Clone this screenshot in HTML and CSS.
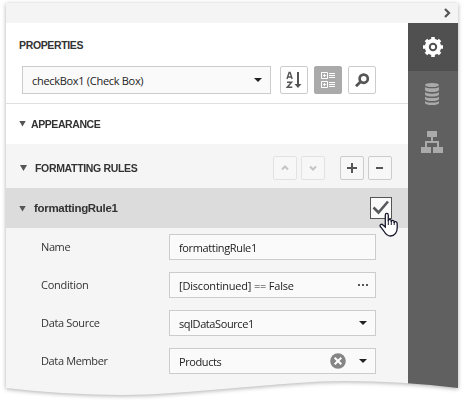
FILE: index.html
```html
<!DOCTYPE html>
<html lang="en">
<head>
<meta charset="utf-8">
<title>Properties</title>
<link rel="stylesheet" href="styles.css">
</head>
<body>
<div class="shadow">
<div class="panel">
  <header class="topbar"><svg width="7" height="10" viewBox="0 0 7 10"><path d="M1 1l4 4-4 4" fill="none" stroke="#555" stroke-width="2.200"/></svg></header>
  <div class="body">
    <main class="content">
      <h1 class="title"><span class="w-prop">PROPERTIES</span></h1>
      <div class="toolbar">
        <div class="select"><span class="w-check">checkBox1 (Check Box)</span><i class="caret"></i></div>
        <button class="tool" aria-label="Sort"><svg width="28" height="28" viewBox="0 0 28 28" fill="none" stroke="#555"><path d="M7 13l2.100-6.500h1L12.200 13M7.800 11h3.600" stroke-width="1.400"/><path d="M7 16.300h4.500L7.300 21.300h5" stroke-width="1.500"/><path d="M18 6v13" stroke-width="2"/><path d="M14.500 18h7L18 22z" fill="#555" stroke="none"/></svg></button>
        <button class="tool active" aria-label="Categories"><svg width="28" height="28" viewBox="0 0 28 28" fill="none" stroke="#fff"><path d="M7.500 6.500h6v6h-6zM7.500 15.500h6v6h-6zM9 9.500h3M10.500 8v3M9 18.500h3M10.500 17v3M15 7.500h6M15 9.500h6M15 11.500h6M15 16.500h6M15 18.500h6M15 20.500h6"/></svg></button>
        <button class="tool" aria-label="Search"><svg width="28" height="28" viewBox="0 0 28 28" fill="none" stroke="#555"><circle cx="15.700" cy="12.700" r="4.100" stroke-width="2.700"/><path d="M12.300 16L8 20.200" stroke-width="2.800"/></svg></button>
      </div>
      <section class="group"><i class="tri"></i><span class="w-app">APPEARANCE</span></section>
      <section class="group rules"><i class="tri"></i><span class="w-rules">FORMATTING RULES</span>
        <div class="actions">
          <button class="small faded" aria-label="Up"><svg width="24" height="24" viewBox="0 0 24 24"><path d="M9 13.500l3-3 3 3"/></svg></button>
          <button class="small faded" aria-label="Down"><svg width="24" height="24" viewBox="0 0 24 24"><path d="M9 10.500l3 3 3-3"/></svg></button>
          <button class="small add" aria-label="Add"><svg width="24" height="24" viewBox="0 0 24 24"><path d="M7 12h10M12 7v10"/></svg></button>
          <button class="small" aria-label="Remove"><svg width="24" height="24" viewBox="0 0 24 24"><path d="M8 12h7"/></svg></button>
        </div>
      </section>
      <section class="group rule"><i class="tri"></i><span class="w-rule">formattingRule1</span>
        <div class="check"><svg width="22" height="22" viewBox="0 0 22 22"><path d="M3.500 10.500l5 5L18 4.500" fill="none" stroke="#58595c" stroke-width="2.600"/></svg>
          <svg class="cursor" width="20" height="25" viewBox="0 0 20 25"><path d="M6.300 15V3.200C6.300 .8 9.300 .8 9.300 3.200V9C9.300 6.700 12.300 6.800 12.300 9.200V10C12.500 7.600 15.200 8 15.200 10.200V11C15.500 8.800 18.200 9.300 18.200 11.700V16C18.200 19.500 16 24 11.500 24C7.500 24 6 21 4.500 18.500L1.400 14.700C.3 12.700 2.500 11.500 4 13Z" fill="#fff" stroke="#18182c" stroke-width="1.300"/><path d="M9.300 8v5M12.300 9v4M15.200 10v3" stroke="#18182c"/></svg>
        </div>
      </section>
      <div class="fields">
        <label class="w-name">Name</label><div class="field"><span class="w-fr">formattingRule1</span></div>
        <label class="w-cond">Condition</label><div class="field"><span class="w-dis">[Discontinued] == False</span><i class="dots"><b></b><b></b><b></b></i></div>
        <label class="w-ds">Data Source</label><div class="field"><span class="w-sql">sqlDataSource1</span><i class="caret"></i></div>
        <label class="w-dm">Data Member</label><div class="field"><span class="w-pr">Products</span><svg class="clear" width="16" height="16" viewBox="0 0 16 16"><circle cx="8" cy="8" r="7.800" fill="#858585"/><path d="M4.700 4.700l6.600 6.600M11.300 4.700l-6.600 6.600" stroke="#fff" stroke-width="2"/></svg><i class="caret"></i></div>
      </div>
    </main>
    <nav class="side">
      <div class="tab current"><svg width="20" height="20" viewBox="0 0 20 20"><g fill="#fff"><circle cx="10" cy="10" r="8.200"/><path d="M8.200 0h3.600v20H8.200zM0 8.200h20v3.600H0z"/><path d="M8.200 0h3.600v20H8.200zM0 8.200h20v3.600H0z" transform="rotate(45 10 10)"/></g><circle cx="10" cy="10" r="3.200" fill="none" stroke="#505050" stroke-width="2"/></svg></div>
      <div class="tab raised"><svg width="14" height="22" viewBox="0 0 14 22" fill="#aaa"><ellipse cx="7" cy="2" rx="7" ry="2"/><path d="M0 3.700Q1 5.300 7 5.300T14 3.700V7Q13 9 7 9T0 7zM0 9.100Q1 10.700 7 10.700T14 9.100V11.500Q13 13.500 7 13.500T0 11.500zM0 13.500Q1 15.100 7 15.100T14 13.500V16Q13 18 7 18T0 16zM0 17.900Q1 19.500 7 19.500T14 17.900V20Q13 22 7 22T0 20z"/></svg></div>
      <div class="tab raised"><svg width="22" height="22" viewBox="0 0 22 22" fill="#aaa"><path d="M6 0h10v6h-4v4h6v6h4v6H12v-6h4v-4H6v4h4v6H0v-6h4v-6h6V6H6z"/></svg></div>
    </nav>
  </div>
</div>
</div>
</body>
</html>
```
FILE: styles.css
```css
* { box-sizing: border-box; }
body { margin: 0; padding: 3px 5px 0 6px; height: 402px; overflow: hidden; background: #fff; font: 11px "Open Sans", sans-serif; color: #333; }
.shadow { filter: drop-shadow(0 1px 2px rgba(0,0,0,.32)); }
.panel { height: 393px; clip-path: path("M0 0H452V385Q395 378 339 378C280 378 180 392 116 392Q60 392 0 385Z"); }
.topbar { height: 20px; background: #f4f4f4; display: flex; justify-content: flex-end; align-items: center; padding-right: 7px; }
.body { display: flex; height: 373px; }
.content { width: 402px; background: #f5f5f5; }
.side { width: 50px; background: #606060; }
.tab { height: 48px; display: flex; align-items: center; justify-content: center; }
.tab.current { background: #505050; }
.raised { padding: 0 2px 2px 0; }
svg { display: block; flex: none; }
span, label { white-space: nowrap; }
.title { margin: 0; height: 43px; padding: 0 13px; background: #fff; font: bold 10.5px/45px "Liberation Sans", sans-serif; }
.toolbar { display: flex; height: 38px; padding-left: 16px; background: #fff; border-bottom: 1px solid #dfdfdf; }
.select { display: flex; align-items: center; justify-content: space-between; width: 249px; height: 28px; margin-right: 9px; padding: 1px 8px 0 9px; background: #fafafa; border: 1px solid #ccc; color: #222; }
.caret { width: 8px; height: 4px; background: #222; clip-path: polygon(0 0, 100% 0, 50% 100%); }
.select .caret { margin-top: -1px; }
button { padding: 0; background: #fff; border: 1px solid #ccc; border-radius: 2px; }
.tool { width: 28px; height: 28px; margin-right: 6px; }
.tool svg { margin: -1px; }
.active { background: #aaa; border-color: #aaa; }
.group { display: flex; align-items: center; height: 40px; padding: 0 0 1px 13px; background: #fff; font: bold 10.5px "Liberation Sans", sans-serif; }
.tri { width: 7px; height: 6px; margin: 0 5px 0 0; background: #555; clip-path: polygon(0 0, 100% 0, 50% 100%); }
.rules { height: 44px; padding: 4px 16px 0 14px; background: #f5f5f5; }
.rules .tri { margin-right: 8px; }
.actions { display: flex; gap: 4px; margin-left: auto; }
.small { width: 24px; height: 24px; background: #f7f7f7; }
.small svg { margin: -1px; fill: none; stroke: #555; stroke-width: 2; }
.faded { border-color: #e2e2e2; }
.faded svg { stroke: #c4c4c4; }
.add { margin-left: 11px; }
.rule { padding: 0 16px 0 13px; background: #dcdcdc; font-size: 11.5px; }
.rule .tri { margin: 1px 8px 0 0; }
.check { position: relative; width: 22px; height: 22px; margin-left: auto; background: #fafafa; border: 1px solid #555; }
.check > svg { margin: -1px; }
.check .cursor { position: absolute; left: 8px; top: 14px; margin: 0; }
.fields { display: grid; grid-template-columns: 128px 207px; grid-auto-rows: 26px; row-gap: 12px; align-items: center; padding: 6px 0 0 35px; }
.fields label { padding-bottom: 2px; }
.field { display: flex; align-items: center; height: 26px; padding: 0 8px 0 9px; background: #fafafa; border: 1px solid #ccc; color: #222; }
.field .caret, .dots { margin: 0 0 0 auto; }
.dots { display: flex; gap: 2px; margin-right: -1px; }
.dots b { width: 2px; height: 2px; background: #555; }
.field .clear { margin: 0 13px 0 auto; }
.field .clear + .caret { margin-left: 0; }
.w-prop { letter-spacing: -.35px; }
.w-app { letter-spacing: -.42px; }
.w-rules { letter-spacing: -.33px; }
.w-rule { letter-spacing: -.3px; }
.w-check { letter-spacing: -.3px; }
.w-fr { letter-spacing: -.36px; }
.w-dis { letter-spacing: -.19px; }
.w-sql { letter-spacing: -.4px; }
.w-pr { letter-spacing: -.41px; }
.w-name { letter-spacing: -.4px; }
.w-cond { letter-spacing: -.25px; }
.w-ds { letter-spacing: -.33px; }
.w-dm { letter-spacing: -.36px; }
```
